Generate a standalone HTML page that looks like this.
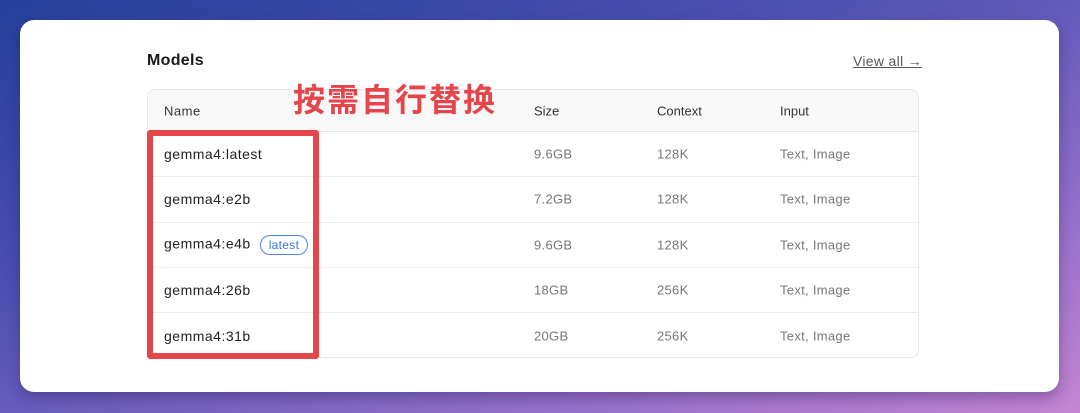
<!DOCTYPE html>
<html><head><meta charset="utf-8"><style>
*{margin:0;padding:0;box-sizing:border-box}
body{width:1080px;height:413px;overflow:hidden;position:relative;font-family:"Liberation Sans","Noto Sans CJK SC",sans-serif;
background:linear-gradient(160deg,#24409a 0%,#4a4fb0 35%,#8a6cc8 70%,#c585d2 100%);}
.card{position:absolute;left:20px;top:20px;width:1039px;height:372px;background:#fff;border-radius:14px;box-shadow:0 6px 14px rgba(40,20,80,.35)}
.title{position:absolute;left:147px;top:52px;font-size:16px;font-weight:bold;color:#1a1a1a;letter-spacing:0.3px}
.view{position:absolute;left:853px;top:53px;font-size:14px;color:#555;text-decoration:underline;letter-spacing:0.3px}
.tbl{position:absolute;left:147px;top:89px;width:772px;height:269px;border:1px solid #e6e6e6;border-radius:8px;overflow:hidden}
.hdr{height:42px;background:#f8f8f8;border-bottom:1px solid #e6e6e6;position:relative;font-size:13px;color:#333}
.row{height:45.3px;border-bottom:1px solid #ececec;position:relative;font-size:13px;color:#777;letter-spacing:0.3px}
.row:last-child{border-bottom:none}
.c{position:absolute;top:50%;transform:translateY(-50%)}
.n{left:16px;color:#222;font-size:14px;letter-spacing:0.5px}
.s{left:386px}.x{left:509px}.i{left:632px}
.badge{display:inline-block;margin-left:9px;border:1px solid #4b84f0;color:#3a73e0;border-radius:10px;font-size:12px;padding:2px 8px;vertical-align:middle;letter-spacing:0.3px}
.red{position:absolute;left:147px;top:130px;width:172px;height:229px;border:6px solid #e5464c;border-radius:3px}
.anno{position:absolute;left:293px;top:75px;font-size:32px;font-weight:bold;color:#e5464c;letter-spacing:2px;font-family:"Noto Sans CJK SC",sans-serif}
</style></head><body>
<div class="card"></div>
<div class="title">Models</div>
<div class="view">View all →</div>
<div class="tbl">
<div class="hdr"><span class="c n" style="font-size:13px;color:#333">Name</span><span class="c s" style="color:#333">Size</span><span class="c x" style="color:#333">Context</span><span class="c i" style="color:#333">Input</span></div>
<div class="row"><span class="c n">gemma4:latest</span><span class="c s">9.6GB</span><span class="c x">128K</span><span class="c i">Text, Image</span></div>
<div class="row"><span class="c n">gemma4:e2b</span><span class="c s">7.2GB</span><span class="c x">128K</span><span class="c i">Text, Image</span></div>
<div class="row"><span class="c n">gemma4:e4b<span class="badge">latest</span></span><span class="c s">9.6GB</span><span class="c x">128K</span><span class="c i">Text, Image</span></div>
<div class="row"><span class="c n">gemma4:26b</span><span class="c s">18GB</span><span class="c x">256K</span><span class="c i">Text, Image</span></div>
<div class="row"><span class="c n">gemma4:31b</span><span class="c s">20GB</span><span class="c x">256K</span><span class="c i">Text, Image</span></div>
</div>
<div class="red"></div>
<div class="anno">按需自行替换</div>
</body></html>
